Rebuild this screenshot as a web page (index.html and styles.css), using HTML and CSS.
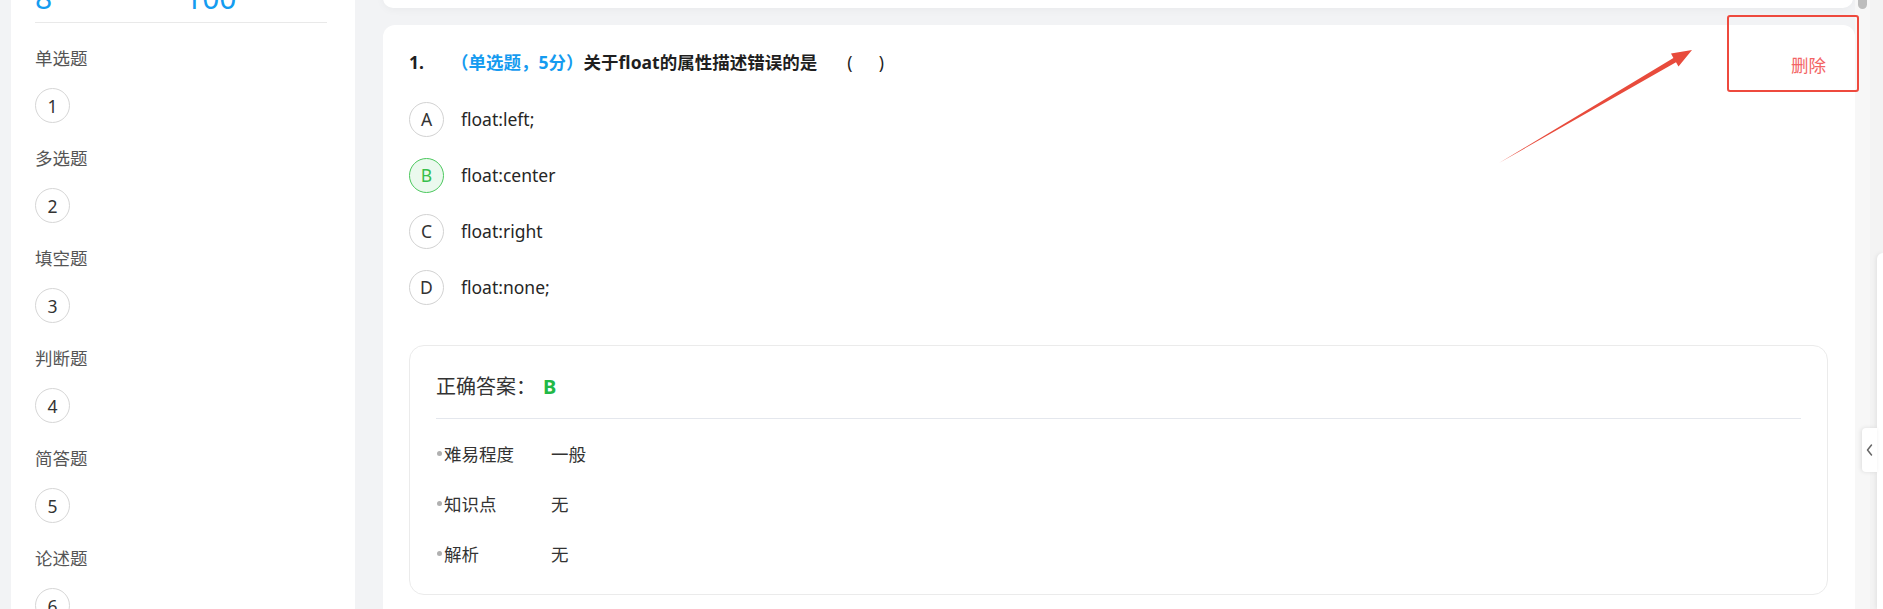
FILE: index.html
```html
<!DOCTYPE html>
<html lang="zh-CN">
<head>
<meta charset="utf-8">
<title>试题预览</title>
<link rel="stylesheet" href="styles.css">
</head>
<body>
<div class="app">
  <aside class="sidebar">
    <div class="stats"><span class="stat">8</span><span class="stat">100</span></div>
    <div class="group"><div class="gtitle">单选题</div><div class="nums"><span class="num">1</span></div></div>
    <div class="group"><div class="gtitle">多选题</div><div class="nums"><span class="num">2</span></div></div>
    <div class="group"><div class="gtitle">填空题</div><div class="nums"><span class="num">3</span></div></div>
    <div class="group"><div class="gtitle">判断题</div><div class="nums"><span class="num">4</span></div></div>
    <div class="group"><div class="gtitle">简答题</div><div class="nums"><span class="num">5</span></div></div>
    <div class="group"><div class="gtitle">论述题</div><div class="nums"><span class="num">6</span></div></div>
  </aside>

  <main class="main">
    <div class="card-prev"></div>
    <section class="qcard">
      <div class="qhead">
        <div class="qtitle"><span class="qno">1.</span><span class="qtype">（单选题，5分）</span><span class="qtext">关于float的属性描述错误的是</span><span class="blank">(&emsp;&ensp;)</span></div>
        <button class="del" type="button">删除</button>
      </div>
      <ul class="options">
        <li class="opt"><span class="letter">A</span><span>float:left;</span></li>
        <li class="opt"><span class="letter ok">B</span><span>float:center</span></li>
        <li class="opt"><span class="letter">C</span><span>float:right</span></li>
        <li class="opt"><span class="letter">D</span><span>float:none;</span></li>
      </ul>
      <div class="answer">
        <div class="ahead">正确答案：<b>B</b></div>
        <div class="arows">
          <div class="arow"><span class="alabel"><i class="dot"></i>难易程度</span><span>一般</span></div>
          <div class="arow"><span class="alabel"><i class="dot"></i>知识点</span><span>无</span></div>
          <div class="arow"><span class="alabel"><i class="dot"></i>解析</span><span>无</span></div>
        </div>
      </div>
    </section>
  </main>

  <div class="track"><div class="thumb"></div></div>
  <div class="rpanel"><div class="rpanel-inner"></div></div>
</div>

<button class="collapse" type="button" aria-label="收起">
  <svg width="15" height="44" viewBox="0 0 15 44"><path d="M9.5 17 L5.5 22 L9.5 27" fill="none" stroke="#666" stroke-width="1.5" stroke-linecap="round" stroke-linejoin="round"/></svg>
</button>

<svg class="annot" width="1883" height="609" viewBox="0 0 1883 609">
  <polygon points="1499,163 1676,62.3 1678.5,66.5 1692,50 1671,53.5 1673.4,57.9" fill="#e84b3c"/>
</svg>
<div class="annot-box"></div>
</body>
</html>
```
FILE: styles.css
```css
html, body {
  margin: 0;
  padding: 0;
}
body {
  background: #f2f3f5;
  font-family: "Noto Sans", "Noto Sans CJK SC", sans-serif;
  overflow: hidden;
}
.app {
  display: flex;
  height: 609px;
  overflow: hidden;
}

/* sidebar */
.sidebar {
  margin-left: 11px;
  width: 344px;
  flex: none;
  box-sizing: border-box;
  background: #fff;
  padding: 0 28px 0 24px;
}
.stats {
  display: flex;
  margin-top: -17px;
  padding-bottom: 9px;
  border-bottom: 1px solid #e9e9e9;
}
.stat {
  font-size: 30px;
  line-height: 30px;
  color: #149cf0;
}
.stat:first-child {
  width: 150px;
}
.group {
  padding-top: 23px;
}
.gtitle {
  font-size: 17.5px;
  line-height: 24px;
  color: #555;
}
.nums {
  margin-top: 18px;
  display: flex;
  gap: 12px;
}
.num {
  width: 35px;
  height: 35px;
  box-sizing: border-box;
  border: 1px solid #d6d6d6;
  border-radius: 50%;
  display: flex;
  align-items: center;
  justify-content: center;
  font-size: 17.5px;
  color: #333;
}

/* main */
.main {
  margin-left: 28px;
  width: 1472px;
  flex: none;
  display: flex;
  flex-direction: column;
  gap: 17px;
}
.card-prev {
  height: 40px;
  margin-top: -32px;
  margin-right: 2px;
  flex: none;
  background: #fff;
  border-radius: 0 0 10px 10px;
  box-shadow: 0 2px 8px rgba(0, 0, 0, 0.04);
}
.qcard {
  background: #fff;
  border-radius: 12px 12px 0 0;
  padding: 22px 27px 40px 26px;
}
.qhead {
  display: flex;
  align-items: center;
  justify-content: space-between;
}
.qtitle {
  font-size: 17.5px;
  line-height: 24px;
  font-weight: 700;
  color: #1f1f1f;
}
.qno {
  display: inline-block;
  width: 42px;
}
.qtype {
  color: #159bf0;
}
.blank {
  margin-left: 30px;
  font-weight: 400;
}
.del {
  border: 0;
  background: none;
  padding: 0;
  margin: 6px 2px 0 0;
  font-family: "Noto Sans", "Noto Sans CJK SC", sans-serif;
  font-size: 17.5px;
  line-height: 24px;
  color: #f36464;
  cursor: pointer;
}
.options {
  list-style: none;
  margin: 14px 0 0;
  padding: 0;
}
.opt {
  height: 56px;
  display: flex;
  align-items: center;
  gap: 17px;
  font-size: 17.5px;
  color: #262626;
}
.letter {
  width: 35px;
  height: 35px;
  box-sizing: border-box;
  border: 1px solid #d2d2d2;
  border-radius: 50%;
  display: flex;
  align-items: center;
  justify-content: center;
  color: #333;
}
.letter.ok {
  border-color: #4cc85e;
  background: #ebf9ee;
  color: #37bf4c;
}

.answer {
  margin-top: 30px;
  border: 1px solid #ebebeb;
  border-radius: 15px;
  padding: 27px 26px 16px;
}
.ahead {
  font-size: 20px;
  line-height: 28px;
  color: #333;
  padding-bottom: 17px;
  border-bottom: 1px solid #e4e7ed;
}
.ahead b {
  margin-left: 7px;
  color: #22b846;
}
.arows {
  padding-top: 9px;
}
.arow {
  height: 50px;
  display: flex;
  align-items: center;
  font-size: 17.5px;
  color: #333;
}
.alabel {
  width: 115px;
  display: flex;
  align-items: center;
  gap: 2px;
}
.dot {
  width: 5px;
  height: 5px;
  margin-left: 1px;
  border-radius: 50%;
  background: #b0b0b0;
}

/* scroll track + right panel */
.track {
  width: 15px;
  flex: none;
  background: #f7f7f7;
}
.thumb {
  margin-left: 3px;
  width: 9px;
  height: 9px;
  border-radius: 0 0 5px 5px;
  background: #bdbdbd;
}
.rpanel {
  width: 13px;
  flex: none;
  background: #f3f3f3;
  display: flex;
  flex-direction: column;
}
.rpanel-inner {
  margin: 253px 0 0 7px;
  flex: 1;
  background: #fff;
  border-radius: 6px 0 0 0;
  box-shadow: -1px 0 4px rgba(0, 0, 0, 0.08);
}

/* overlays */
.collapse {
  position: absolute;
  left: 1862px;
  top: 428px;
  width: 15px;
  height: 44px;
  padding: 0;
  border: 0;
  background: #fff;
  border-radius: 4px 0 0 4px;
  box-shadow: -1px 0 4px rgba(0, 0, 0, 0.1);
  display: flex;
}
.annot {
  position: absolute;
  left: 0;
  top: 0;
  pointer-events: none;
}
.annot-box {
  position: absolute;
  left: 1727px;
  top: 15px;
  width: 128px;
  height: 73px;
  border: 2px solid #ee4a3e;
  border-radius: 3px;
  pointer-events: none;
}
```
